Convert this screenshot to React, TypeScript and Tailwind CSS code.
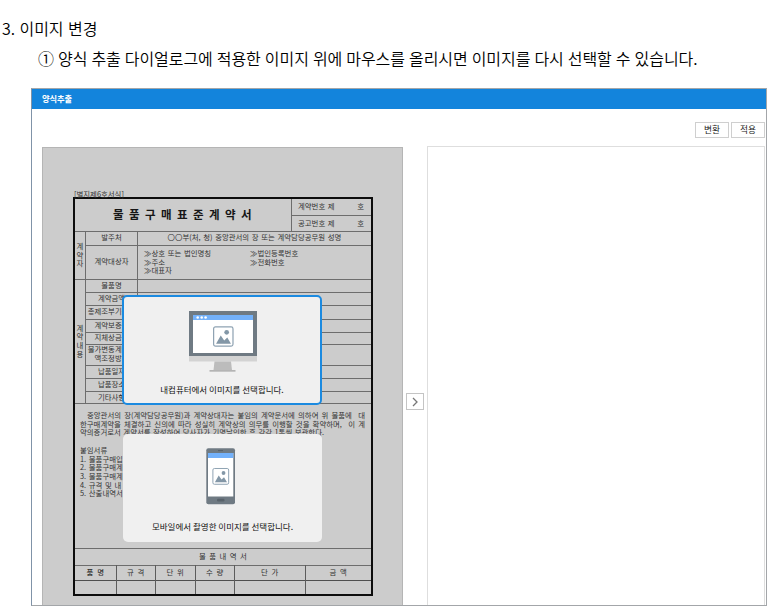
import type { ReactNode } from "react";

function DialogText({ children, cls }: { children: ReactNode; cls: string }) {
  return (
    <div className={`absolute inset-x-0 text-center text-[8.5px] leading-[13px] text-[#111] whitespace-nowrap ${cls}`}>
      {children}
    </div>
  );
}

const contractRows = [
  { label: "물품명", cls: "h-[13px]" },
  { label: "계약금액", cls: "h-[13px]" },
  { label: "총제조부기금액", cls: "h-[14px]" },
  { label: "계약보증금", cls: "h-[13px]" },
  { label: "지체상금율", cls: "h-[12px]" },
  { label: "물가변동계약금\n액조정방법", cls: "h-[21px]" },
  { label: "납품일자", cls: "h-[13px]" },
  { label: "납품장소", cls: "h-[13px]" },
  { label: "기타사항", cls: "h-[12px]" },
];

const itemColumns = [
  { label: "품 명", cls: "w-[42px] font-medium" },
  { label: "규 격", cls: "w-[39px]" },
  { label: "단 위", cls: "w-[40px]" },
  { label: "수 량", cls: "w-[39px]" },
  { label: "단 가", cls: "w-[71px]" },
  { label: "금 액", cls: "w-[65px]" },
];

const line = "border-[#6d6d6d]";

function ContractForm() {
  return (
    <div className="mt-[-1px] ml-[30px] h-[399px] w-[300px] border-2 border-[#0c0c0c] text-[7.4px] leading-[8.6px] text-[#333] [word-spacing:1px] whitespace-nowrap">
      <div className={`flex h-[33px] border-b ${line}`}>
        <div className={`flex w-[217px] items-center border-r pb-[2px] pl-[38px] text-[11.5px] font-bold tracking-[1.4px] text-[#161616] [word-spacing:0px] ${line}`}>
          물 품 구 매 표 준 계 약 서
        </div>
        <div className="flex-1">
          <div className={`flex h-[17px] items-center justify-between border-b pr-[7px] pb-[2px] pl-[6px] ${line}`}>
            <span>계약번호 제</span>
            <span>호</span>
          </div>
          <div className="flex h-[15px] items-center justify-between pr-[7px] pb-[1px] pl-[6px]">
            <span>공고번호 제</span>
            <span>호</span>
          </div>
        </div>
      </div>
      <div className={`flex h-[48px] border-b ${line}`}>
        <div className={`flex w-[11px] flex-col items-center justify-center border-r pb-[1px] ${line}`}>
          <span>계</span>
          <span>약</span>
          <span>자</span>
        </div>
        <div className="flex-1">
          <div className={`flex h-[14px] items-center border-b ${line}`}>
            <div className={`flex h-full w-[52px] items-center justify-center border-r pb-[2px] ${line}`}>발주처</div>
            <div className="flex-1 pb-[2px] text-center">〇〇부(처, 청) 중앙관서의 장 또는 계약담당공무원 성명</div>
          </div>
          <div className="flex h-[33px]">
            <div className={`flex w-[52px] items-center justify-center border-r pb-[2px] ${line}`}>계약대상자</div>
            <div className="w-[112px] pt-[3px] pl-[6px]">
              <p>≫상호 또는 법인명칭</p>
              <p>≫주소</p>
              <p>≫대표자</p>
            </div>
            <div className="pt-[3px]">
              <p>≫법인등록번호</p>
              <p>≫전화번호</p>
            </div>
          </div>
        </div>
      </div>
      <div className={`flex h-[124px] border-b ${line}`}>
        <div className={`flex w-[11px] flex-col items-center justify-center border-r pb-[1px] ${line}`}>
          <span>계</span>
          <span>약</span>
          <span>내</span>
          <span>용</span>
        </div>
        <div className="flex-1">
          {contractRows.map((row) => (
            <div key={row.label} className={`flex border-b last:border-b-0 ${line} ${row.cls}`}>
              <div className={`flex w-[52px] items-center justify-center border-r pb-[2px] text-center whitespace-pre ${line}`}>
                {row.label}
              </div>
            </div>
          ))}
        </div>
      </div>
      <div className={`h-[145px] border-b px-[5px] pt-[7px] leading-[8.65px] ${line}`}>
        <p className="w-[285px] pl-[7px] [text-align-last:justify] [word-spacing:0px]">
          중앙관서의 장(계약담당공무원)과 계약상대자는 붙임의 계약문서에 의하여 위 물품에 &nbsp;대
        </p>
        <p className="w-[285px] [text-align-last:justify] [word-spacing:0px]">
          한구매계약을 체결하고 신의에 따라 성실히 계약상의 의무를 이행할 것을 확약하며, &nbsp;이 계
        </p>
        <p className="w-[244px] [text-align-last:justify] [word-spacing:0px]">
          약의증거로서 계약서를 작성하여 당사자가 기명날인한 후 각각 1통씩 보관한다.
        </p>
        <p className="mt-[9px]">붙임서류</p>
        <p>1. 물품구매입</p>
        <p>2. 물품구매계</p>
        <p>3. 물품구매계</p>
        <p>4. 규격 및 내</p>
        <p>5. 산출내역서</p>
      </div>
      <div className="flex h-[16px] items-center pb-[1px] pl-[124px] tracking-[0.4px]">물 품 내 역 서</div>
      <div className="flex h-[29px]">
        {itemColumns.map((col) => (
          <div key={col.label} className={`border-r border-[#5c5c5c] last:border-r-0 ${col.cls}`}>
            <div className="flex h-[16px] items-center justify-center border-t border-b border-t-[#6d6d6d] border-b-[#4f4f4f] pb-[2px] tracking-[0.6px]">
              {col.label}
            </div>
          </div>
        ))}
      </div>
    </div>
  );
}

function Photo({ x, y, s }: { x: number; y: number; s: number }) {
  return (
    <g transform={`translate(${x} ${y}) scale(${s})`}>
      <rect x="0.6" y="0.6" width="19" height="19" rx="1.8" fill="#fff" stroke="#8fa3b3" strokeWidth="1.2" />
      <circle cx="13.4" cy="6" r="2.3" fill="#8397a7" />
      <path d="M3 17.3 L7.6 9 L11 14 L14 11 L17.6 17.3 Z" fill="#8397a7" />
    </g>
  );
}

function Monitor() {
  return (
    <svg className="absolute top-[13px] left-[64px]" width="70" height="64" viewBox="0 0 70 64">
      <rect x="1" y="1" width="68" height="46" fill="#6f7a83" />
      <rect x="5" y="5" width="60" height="38" fill="#fff" />
      <rect x="5" y="5" width="60" height="5" fill="#73b1fa" />
      <circle cx="9.7" cy="7.5" r="1.3" fill="#fff" />
      <circle cx="13.7" cy="7.5" r="1.3" fill="#fff" />
      <circle cx="17.6" cy="7.5" r="1.3" fill="#fff" />
      <rect x="1" y="46" width="68" height="5.5" fill="#d3d3d3" />
      <path d="M26.5 51.5H43L44 60H25.5Z" fill="#bcbcbc" />
      <rect x="21.5" y="60" width="26" height="1.7" fill="#b4b4b4" />
      <Photo x={25} y={16.2} s={1.02} />
    </svg>
  );
}

function Phone() {
  return (
    <svg className="absolute top-[13px] left-[82px]" width="32" height="58" viewBox="0 0 32 58">
      <rect x="1.3" y="1.2" width="28.7" height="56" rx="2" fill="#6f7a83" />
      <rect x="13" y="3" width="5" height="1.1" fill="#58626b" />
      <rect x="3" y="6" width="25.3" height="43.5" fill="#fff" />
      <rect x="3" y="6" width="25.3" height="5" fill="#73b1fa" />
      <rect x="12" y="51.7" width="7.5" height="2.7" rx="1.2" fill="#58626b" />
      <Photo x={7.4} y={21} s={0.83} />
    </svg>
  );
}

export default function App() {
  return (
    <div className="h-[612px] w-[770px] overflow-hidden bg-white pt-[16px] font-['Noto_Sans_CJK_KR',sans-serif] text-black">
      <h1 className="pl-[2px] text-[16px] leading-[24px] font-[350] tracking-[-0.1px] [word-spacing:1.2px] whitespace-nowrap">3. 이미지 변경</h1>
      <p className="mt-[6px] pl-[38px] text-[16px] leading-[24px] font-[350] tracking-[-0.07px] [word-spacing:0.6px] whitespace-nowrap">
        ① 양식 추출 다이얼로그에 적용한 이미지 위에 마우스를 올리시면 이미지를 다시 선택할 수 있습니다.
      </p>
      <div className="mt-[18px] ml-[31px] flex h-[518px] w-[736px] flex-col border border-[#a3a6a9] border-l-[#8093a8]">
        <header className="flex h-[20px] shrink-0 items-center bg-[#1384dc] pb-[2px] pl-[10px] text-[8.2px] leading-[12px] font-bold text-white">
          양식추출
        </header>
        <div className="flex h-[38px] shrink-0 justify-end gap-[2px] pt-[13px] pr-[1px]">
          <button className="h-[16px] w-[34px] border border-[#cfcfcf] text-[8.7px] leading-[14px] text-[#222]">변환</button>
          <button className="h-[16px] w-[34px] border border-[#cfcfcf] text-[8.7px] leading-[14px] text-[#222]">적용</button>
        </div>
        <main className="flex min-h-0 flex-1">
          <section className="relative ml-[10px] w-[361px] overflow-hidden border border-b-0 border-[#b5b5b5] bg-[#cccccc]">
            <div className="mt-[42px] h-[8px] pl-[31px] text-[7.4px] leading-[8px] text-[#333]">[별지제6호서식]</div>
            <ContractForm />
            <div className="absolute top-[147px] left-[79px] h-[110px] w-[200px] rounded-[5px] border-2 border-[#1b8ae0] bg-[#f0f0f0]">
              <Monitor />
              <DialogText cls="bottom-[7px]">내컴퓨터에서 이미지를 선택합니다.</DialogText>
            </div>
            <div className="absolute top-[286px] left-[80px] h-[108px] w-[199px] rounded-[5px] bg-[#f0f0f0]">
              <Phone />
              <DialogText cls="bottom-[9px]">모바일에서 촬영한 이미지를 선택합니다.</DialogText>
            </div>
          </section>
          <div className="flex w-[24px] justify-center pt-[246px]">
            <button className="flex h-[17px] w-[18px] items-center justify-center border border-[#c4c4c4] bg-white">
              <svg width="8" height="10" viewBox="0 0 8 10" fill="none" stroke="#777" strokeWidth="1.3">
                <path d="M2 1L6 5L2 9" />
              </svg>
            </button>
          </div>
          <section className="mt-[-1px] mr-[1px] flex-1 border border-b-0 border-[#dedede]" />
        </main>
      </div>
    </div>
  );
}
